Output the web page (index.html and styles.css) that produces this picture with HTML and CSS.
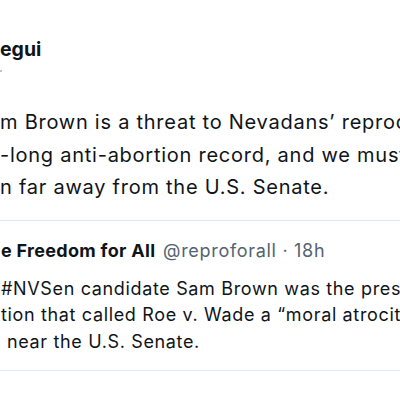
FILE: index.html
```html
<!DOCTYPE html>
<html>
<head>
<meta charset="utf-8">
<link rel="stylesheet" href="styles.css">
</head>
<body>
<div class="tweet">
  <div class="author">
    <span class="name">egui</span>
    <span class="handle-dot"></span>
  </div>
  <div class="text">
    <div class="line">m Brown is a threat to Nevadans’ reproductive freedom.</div>
    <div class="line">-long anti-abortion record, and we must keep</div>
    <div class="line">n far away from the U.S. Senate.</div>
  </div>
  <div class="quote">
    <div class="qhead">
      <span class="qname">e Freedom for All</span>
      <span class="qhandle">@reproforall · 18h</span>
    </div>
    <div class="qtext">
      <div class="line">#NVSen candidate Sam Brown was the president</div>
      <div class="line">tion that called Roe v. Wade a “moral atrocity.”</div>
      <div class="line indent">near the U.S. Senate.</div>
    </div>
  </div>
</div>
</body>
</html>
```
FILE: styles.css
```css
html, body {
  margin: 0;
  padding: 0;
  background: #ffffff;
  overflow: hidden;
  width: 400px;
  height: 400px;
}
.tweet {
  font-family: Inter, "Noto Sans", sans-serif;
  color: #0f1419;
  padding-top: 37px;
}
.author {
  display: flex;
  flex-direction: column;
  height: 69px;
}
.name {
  font-weight: 700;
  font-size: 19.5px;
  line-height: 24px;
  letter-spacing: 0px;
}
.handle-dot {
  display: block;
  width: 2px;
  height: 2px;
  margin-top: 9px;
  background: #a7b1ba;
  border-radius: 1px;
}
.text {
  font-size: 20px;
  line-height: 32.5px;
  letter-spacing: 0.75px;
}
.line {
  white-space: nowrap;
}
.quote {
  margin-top: 16px;
  margin-left: -40px;
  width: 480px;
  border: 1px solid #e3e8ec;
  border-radius: 16px;
  padding: 18.5px 0 15px 40px;
  box-sizing: border-box;
}
.qhead {
  font-size: 18px;
  line-height: 24px;
  letter-spacing: 0.7px;
  white-space: nowrap;
}
.qname {
  font-weight: 700;
  letter-spacing: 0.3px;
}
.qhandle {
  color: #536471;
  margin-left: 2px;
}
.qtext {
  margin-top: 12.7px;
  font-size: 18px;
  line-height: 26.5px;
  letter-spacing: 0.65px;
}
.indent {
  padding-left: 6px;
}
```
